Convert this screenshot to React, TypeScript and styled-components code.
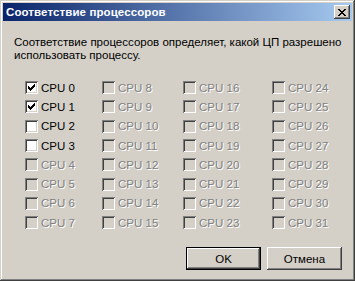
import { FC } from "react"
import styled, { createGlobalStyle, css } from "styled-components";

const FACE = '#d4d0c8';
const SHADOW = '#808080';
const DARK = '#404040';

const GlobalStyle = createGlobalStyle`
  html, body { margin: 0; padding: 0; background: ${FACE}; }
  body { font-family: Tahoma, "Liberation Sans", Arial, sans-serif; font-size: 11px; }
`

const raised = css`
  box-shadow:
    inset -1px -1px 0 ${DARK},
    inset 1px 1px 0 #fff,
    inset -2px -2px 0 ${SHADOW},
    inset 2px 2px 0 ${FACE};
`

const Window = styled.div`
  width: 355px;
  height: 281px;
  box-sizing: border-box;
  padding: 3px;
  background: ${FACE};
  display: flex;
  flex-direction: column;
  box-shadow:
    inset -1px -1px 0 ${DARK},
    inset 1px 1px 0 ${FACE},
    inset -2px -2px 0 ${SHADOW},
    inset 2px 2px 0 #fff;
`

const TitleBar = styled.div`
  height: 18px;
  display: flex;
  align-items: center;
  justify-content: space-between;
  padding: 0 2px 0 3px;
  background: linear-gradient(to right, #0a246a, #a6caf0);
`

const Title = styled.span`
  color: #fff;
  font-weight: bold;
  font-size: 11.5px;
  font-family: "Liberation Sans", Arial, sans-serif;
  letter-spacing: 0.1px;
`

const CloseButton = styled.div`
  width: 16px;
  height: 14px;
  background: ${FACE};
  display: flex;
  align-items: center;
  justify-content: center;
  ${raised}
`

const Body = styled.div`
  flex: 1;
  display: flex;
  flex-direction: column;
  padding: 15px 8px 8px 11px;
`

const Description = styled.p`
  margin: 0;
  font-family: "Liberation Sans", Arial, sans-serif;
  font-size: 11.5px;
  line-height: 13px;
  color: #000;
  white-space: nowrap;
`

const Grid = styled.div`
  display: grid;
  grid-template-columns: 77px 81px 89px 1fr;
  grid-auto-flow: column;
  grid-template-rows: repeat(8, 19.3px);
  margin: 16px 0 0 11px;
`

const Option = styled.label<{ $disabled?: boolean }>`
  display: flex;
  align-items: center;
  gap: 3px;
  font-family: "Liberation Sans", Arial, sans-serif;
  font-size: 11.5px;
  color: ${p => p.$disabled ? SHADOW : '#000'};
  ${p => p.$disabled && css`text-shadow: 1px 1px 0 #fff;`}
`

const Box = styled.span<{ $disabled?: boolean }>`
  width: 13px;
  height: 13px;
  box-sizing: border-box;
  background: ${p => p.$disabled ? FACE : '#fff'};
  display: flex;
  align-items: center;
  justify-content: center;
  box-shadow:
    inset 1px 1px 0 ${SHADOW},
    inset -1px -1px 0 #fff,
    inset 2px 2px 0 ${DARK},
    inset -2px -2px 0 ${FACE};
`

const Footer = styled.div`
  margin-top: auto;
  display: flex;
  justify-content: flex-end;
  gap: 6px;
  padding-right: 2px;
`

const Button = styled.div<{ $default?: boolean }>`
  width: 75px;
  height: 23px;
  box-sizing: border-box;
  display: flex;
  align-items: center;
  justify-content: center;
  font-family: "Liberation Sans", Arial, sans-serif;
  font-size: 11.5px;
  color: #000;
  ${p => p.$default ? css`
    border: 1px solid #000;
    ${raised}
  ` : raised}
`

const Check: FC = () => (
  <svg width="7" height="7" viewBox="0 0 7 7" shapeRendering="crispEdges">
    {[2, 3, 4, 3, 2, 1, 0].map((y, x) => (
      <rect key={x} x={x} y={y} width="1" height="3" fill="#000" />
    ))}
  </svg>
)

const CloseGlyph: FC = () => (
  <svg width="8" height="7" viewBox="0 0 8 7" shapeRendering="crispEdges">
    {[0, 1, 2, 3, 4, 5, 6].map(i => (
      <g key={i}>
        <rect x={i} y={i} width="2" height="1" fill="#000" />
        <rect x={6 - i} y={i} width="2" height="1" fill="#000" />
      </g>
    ))}
  </svg>
)

const checked = [0, 1];
const enabled = [0, 1, 2, 3];

export default function App() {
  return (
    <>
      <GlobalStyle />
      <Window>
        <TitleBar>
          <Title>Соответствие процессоров</Title>
          <CloseButton><CloseGlyph /></CloseButton>
        </TitleBar>
        <Body>
          <Description>
            Соответствие процессоров определяет, какой ЦП разрешено<br />
            использовать процессу.
          </Description>
          <Grid>
            {Array.from({ length: 32 }, (_, i) => {
              const disabled = !enabled.includes(i);
              return (
                <Option key={i} $disabled={disabled}>
                  <Box $disabled={disabled}>{checked.includes(i) && <Check />}</Box>
                  CPU {i}
                </Option>
              );
            })}
          </Grid>
          <Footer>
            <Button $default>OK</Button>
            <Button>Отмена</Button>
          </Footer>
        </Body>
      </Window>
    </>
  );
}
